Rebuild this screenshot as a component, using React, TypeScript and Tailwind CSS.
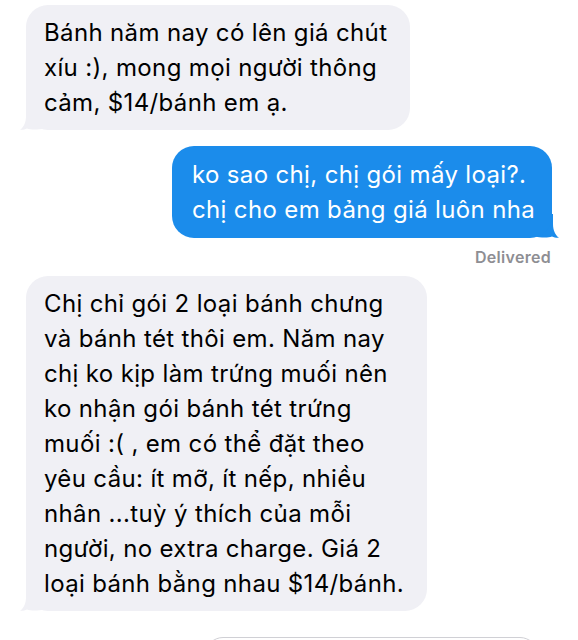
import React from "react";

const font = { fontFamily: '"Inter", "Noto Sans", "Liberation Sans", sans-serif' };

function GrayTail() {
  return (
    <svg className="absolute left-[-6px] bottom-0" width="26" height="24" viewBox="0 0 26 24">
      <path d="M6 0 H26 V22 C18 24 11 24 7 22.5 C5 23.6 2.5 24 0 23.8 C4 21 6 16 6 10 Z" fill="#f0f0f5" />
    </svg>
  );
}

function BlueTail() {
  return (
    <svg className="absolute right-[-7px] bottom-0" width="26" height="24" viewBox="0 0 26 24">
      <path d="M20 0 H0 V22 C8 24 15 24 19 22.5 C21 23.6 23.5 24 26 23.8 C22 21 20 16 20 10 Z" fill="#1b8ceb" />
    </svg>
  );
}

export default function App() {
  return (
    <div className="w-[578px] h-[640px] overflow-hidden bg-white flex flex-col pt-[5px]" style={font}>
      <div className="relative ml-[26px] w-[384px]">
        <GrayTail />
        <div className="relative rounded-[22px] bg-[#f0f0f5] px-[18px] py-[10px] text-[24px] leading-[35px] tracking-[0.35px] text-black whitespace-nowrap">
          Bánh năm nay có lên giá chút
          <br />
          xíu :), mong mọi người thông
          <br />
          cảm, $14/bánh em ạ.
        </div>
      </div>

      <div className="relative mt-[16px] ml-[172px] w-[380px]">
        <BlueTail />
        <div className="relative rounded-[22px] bg-[#1b8ceb] px-[20px] py-[11px] text-[24px] leading-[35px] tracking-[0.35px] text-white whitespace-nowrap">
          ko sao chị, chị gói mấy loại?.
          <br />
          chị cho em bảng giá luôn nha
        </div>
      </div>

      <div className="self-end mr-[27px] mt-[9px] text-[16px] leading-[20px] font-semibold tracking-[0.3px] text-[#8e8e93]">
        Delivered
      </div>

      <div className="relative mt-[9px] ml-[26px] w-[401px]">
        <GrayTail />
        <div className="relative rounded-[22px] bg-[#f0f0f5] px-[18px] py-[10px] text-[24px] leading-[35px] tracking-[0.35px] text-black whitespace-nowrap">
          Chị chỉ gói 2 loại bánh chưng
          <br />
          và bánh tét thôi em. Năm nay
          <br />
          chị ko kịp làm trứng muối nên
          <br />
          ko nhận gói bánh tét trứng
          <br />
          muối :( , em có thể đặt theo
          <br />
          yêu cầu: ít mỡ, ít nếp, nhiều
          <br />
          nhân ...tuỳ ý thích của mỗi
          <br />
          người, no extra charge. Giá 2
          <br />
          loại bánh bằng nhau $14/bánh.
        </div>
      </div>

      <div className="shrink-0 mt-[26px] ml-[205px] w-[333px] h-[40px] rounded-[18px] border border-[#d0d0d5]" />
    </div>
  );
}
